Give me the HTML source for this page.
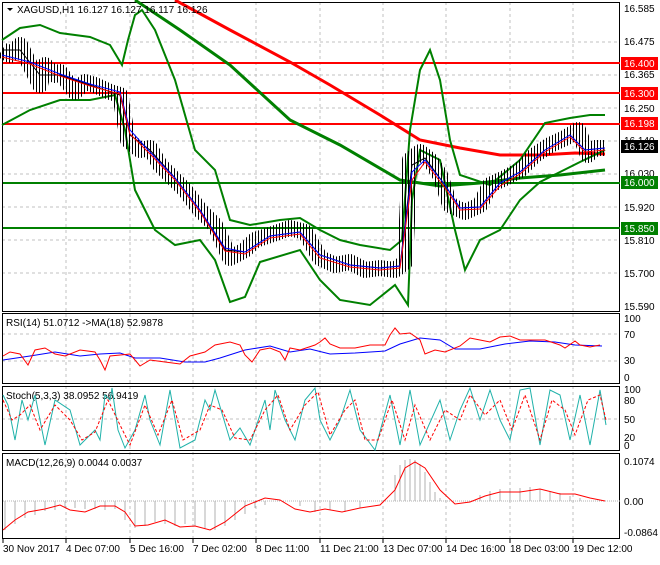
<!DOCTYPE html>
<html><head><meta charset="utf-8"><style>
html,body{margin:0;padding:0;background:#fff;}
body{width:660px;height:560px;overflow:hidden;font-family:"Liberation Sans",sans-serif;}
svg text{font-family:"Liberation Sans",sans-serif;font-size:10px;fill:#000;}
</style></head><body>
<svg width="660" height="560" viewBox="0 0 660 560" xmlns="http://www.w3.org/2000/svg">
<defs>
<pattern id="bars" patternUnits="userSpaceOnUse" width="3" height="10"><rect x="0" y="0" width="1" height="10" fill="#000"/></pattern>
</defs>
<rect width="660" height="560" fill="#fff"/>
<!-- grid -->
<g stroke="#c0c0c0" stroke-dasharray="3,3" stroke-width="1">
<line x1="66" y1="2" x2="66" y2="539"/><line x1="130" y1="2" x2="130" y2="539"/>
<line x1="193" y1="2" x2="193" y2="539"/><line x1="256" y1="2" x2="256" y2="539"/>
<line x1="320" y1="2" x2="320" y2="539"/><line x1="383" y1="2" x2="383" y2="539"/>
<line x1="446" y1="2" x2="446" y2="539"/><line x1="510" y1="2" x2="510" y2="539"/>
<line x1="573" y1="2" x2="573" y2="539"/>
<line x1="2" y1="42" x2="620" y2="42"/><line x1="2" y1="75" x2="620" y2="75"/>
<line x1="2" y1="108" x2="620" y2="108"/><line x1="2" y1="141" x2="620" y2="141"/>
<line x1="2" y1="174" x2="620" y2="174"/><line x1="2" y1="207" x2="620" y2="207"/>
<line x1="2" y1="240" x2="620" y2="240"/><line x1="2" y1="273" x2="620" y2="273"/>
<line x1="2" y1="334" x2="620" y2="334"/><line x1="2" y1="361" x2="620" y2="361"/>
<line x1="2" y1="419" x2="620" y2="419"/>
</g>
<!-- panel borders -->
<g fill="none" stroke="#000" stroke-width="1">
<rect x="2.5" y="2.5" width="617" height="309"/>
<rect x="2.5" y="313.5" width="617" height="70"/>
<rect x="2.5" y="386.5" width="617" height="64"/>
<rect x="2.5" y="453.5" width="617" height="85"/>
</g>
<!-- horizontal levels -->
<g stroke-width="2">
<line x1="3" y1="63" x2="620" y2="63" stroke="#f00"/>
<line x1="3" y1="93" x2="620" y2="93" stroke="#f00"/>
<line x1="3" y1="124" x2="620" y2="124" stroke="#f00"/>
<line x1="3" y1="183" x2="620" y2="183" stroke="#008000"/>
<line x1="3" y1="228" x2="620" y2="228" stroke="#008000"/>
</g>
<!-- MAs -->
<polyline fill="none" stroke="#f00" stroke-width="3" points="175,0 230,30 290,62 330,85 380,115 420,140 460,148 500,155 540,155 575,153 605,154"/>
<polyline fill="none" stroke="#008000" stroke-width="3" points="135,0 180,30 230,65 290,120 340,145 400,180 440,186 480,183 520,178 560,175 605,170"/>
<!-- bollinger -->
<polyline fill="none" stroke="#008000" stroke-width="2" points="2,40 20,28 40,25 60,33 90,37 110,45 122,65 128,40 135,15 142,10 155,30 175,80 195,150 215,170 230,220 250,225 280,220 300,218 320,230 340,240 360,245 390,250 402,240 410,130 420,70 430,50 440,80 450,140 460,175 490,185 520,160 545,123 570,118 590,115 605,115"/>
<polyline fill="none" stroke="#008000" stroke-width="2" points="2,125 30,110 60,100 90,100 115,95 125,130 135,190 155,230 175,245 200,240 215,260 230,302 245,297 260,262 300,250 320,280 340,300 370,305 395,285 408,305 412,200 420,150 440,160 455,230 465,270 480,240 500,230 520,200 540,182 560,172 580,162 605,150"/>
<!-- price bars -->
<polyline fill="none" stroke="url(#bars)" stroke-width="16" stroke-linejoin="round" points="2,50 10,55 20,45 30,65 40,85 45,65 55,75 60,72 75,92 85,82 95,85 110,92 120,95 128,140 140,150 150,148 160,165 170,175 185,190 200,210 215,225 230,258 245,250 255,240 270,235 290,228 305,232 320,258 335,265 350,262 365,270 380,268 395,270 405,262 410,160 420,152 430,160 440,175 450,205 465,212 480,205 490,185 505,178 520,170 535,155 550,145 565,138 578,130 588,155 595,148 605,148"/>
<polyline fill="none" stroke="#000" stroke-width="1" points="2,50 20,50 40,75 60,75 90,85 120,95 130,135 150,150 175,178 200,210 225,250 245,252 270,236 300,232 320,255 350,265 380,268 400,266 412,165 425,158 445,185 460,208 480,207 500,183 520,172 545,150 570,135 585,150 605,148"/>
<polyline fill="none" stroke="#00f" stroke-width="1" points="2,55 30,62 60,74 90,84 120,92 130,130 150,152 175,178 200,210 225,248 245,252 270,236 300,232 320,255 350,265 380,268 400,266 412,172 425,160 445,185 460,208 480,207 500,183 520,172 545,150 570,135 585,150 605,148"/>
<polyline fill="none" stroke="#f00" stroke-width="1" points="2,57 30,64 60,76 90,86 120,94 130,134 150,154 175,180 200,212 225,251 245,254 270,238 300,234 320,258 350,267 380,270 400,268 412,180 425,162 445,188 460,210 480,209 500,186 520,174 545,152 570,137 585,152 605,150"/>
<!-- header -->
<polygon points="7,8 13,8 10,11" fill="#000"/>
<text x="17" y="13">XAGUSD,H1  16.127 16.127 16.117 16.126</text>
<!-- price axis -->
<g>
<text x="624" y="12">16.585</text><text x="624" y="45">16.475</text>
<text x="624" y="78">16.365</text><text x="624" y="112">16.250</text>
<text x="624" y="144">16.140</text><text x="624" y="177">16.030</text>
<text x="624" y="211">15.920</text><text x="624" y="244">15.810</text>
<text x="624" y="277">15.700</text><text x="624" y="310">15.590</text>
<rect x="621" y="57" width="37" height="13" fill="#f00"/><text x="624" y="67" style="fill:#fff">16.400</text>
<rect x="621" y="87" width="37" height="13" fill="#f00"/><text x="624" y="97" style="fill:#fff">16.300</text>
<rect x="621" y="117" width="37" height="13" fill="#f00"/><text x="624" y="127" style="fill:#fff">16.198</text>
<rect x="621" y="140" width="37" height="13" fill="#000"/><text x="624" y="150" style="fill:#fff">16.126</text>
<rect x="621" y="176" width="37" height="13" fill="#008000"/><text x="624" y="186" style="fill:#fff">16.000</text>
<rect x="621" y="222" width="37" height="13" fill="#008000"/><text x="624" y="232" style="fill:#fff">15.850</text>
</g>
<!-- RSI -->
<text x="6" y="326">RSI(14) 51.0712  -&gt;MA(18) 52.9878</text>
<polyline fill="none" stroke="#00f" stroke-width="1" points="3,360 30,356 55,352 80,356 100,354 120,353 135,358 160,358 185,362 205,362 220,358 245,350 270,346 290,352 310,349 330,354 355,353 385,351 400,344 420,338 440,340 455,349 480,349 505,344 530,341 555,342 575,345 602,346"/>
<polyline fill="none" stroke="#f00" stroke-width="1" points="3,356 10,352 20,354 28,365 35,350 45,348 55,354 65,356 80,350 95,352 100,360 105,370 110,356 130,354 140,366 150,360 165,362 180,364 190,356 205,352 215,345 230,342 240,345 245,355 252,362 260,350 270,348 280,352 285,360 290,348 300,350 315,345 320,342 325,338 330,344 340,348 355,348 370,345 380,345 385,345 390,335 395,328 400,334 410,333 420,340 425,354 435,350 445,352 460,346 470,338 480,340 490,342 500,337 510,336 520,340 530,340 545,340 560,345 565,348 575,341 580,345 590,347 600,345"/>
<text x="624" y="322">100</text><text x="624" y="338">70</text><text x="624" y="364">30</text><text x="624" y="381">0</text>
<!-- Stoch -->
<text x="6" y="399">Stoch(5,3,3) 38.0952 56.9419</text>
<polyline fill="none" stroke="#20b2aa" stroke-width="1" points="3,395 8,405 15,440 22,400 28,420 35,395 45,445 55,400 70,410 80,445 95,430 100,440 105,395 110,400 112,388 118,430 125,448 135,430 145,395 150,420 160,445 170,390 180,448 195,440 205,400 210,410 215,390 230,440 240,428 250,445 265,400 270,430 275,390 285,420 295,440 305,400 315,388 320,420 330,440 340,420 350,390 360,430 375,450 390,395 400,445 410,390 420,445 440,400 450,440 460,410 470,388 480,420 490,390 500,420 510,440 520,390 530,388 540,445 550,390 560,395 570,440 580,395 590,445 600,390 606,425"/>
<polyline fill="none" stroke="#f00" stroke-width="1" stroke-dasharray="3,2" points="3,400 12,420 20,415 30,405 40,430 55,405 70,420 82,440 95,432 108,400 120,425 130,445 145,405 158,435 172,400 183,440 200,430 210,405 222,410 235,438 250,440 265,410 278,395 290,430 305,405 318,392 330,435 345,410 355,400 365,440 378,440 392,400 405,440 415,405 430,440 445,410 460,420 470,395 485,415 500,400 512,430 525,395 540,440 552,400 565,410 575,435 588,400 600,395 606,420"/>
<text x="624" y="393">100</text><text x="624" y="404">80</text><text x="624" y="423">50</text><text x="624" y="441">20</text><text x="624" y="449">0</text>
<!-- MACD -->
<text x="6" y="466">MACD(12,26,9) 0.0044 0.0037</text>
<g stroke="#b0b0b0" stroke-width="1">
<line x1="5" y1="501" x2="5" y2="530"/><line x1="15" y1="501" x2="15" y2="524"/><line x1="25" y1="501" x2="25" y2="518"/><line x1="35" y1="501" x2="35" y2="515"/><line x1="45" y1="501" x2="45" y2="511"/><line x1="55" y1="501" x2="55" y2="510"/><line x1="65" y1="501" x2="65" y2="508"/><line x1="75" y1="501" x2="75" y2="508"/><line x1="85" y1="501" x2="85" y2="509"/><line x1="95" y1="501" x2="95" y2="509"/><line x1="105" y1="501" x2="105" y2="510"/><line x1="115" y1="501" x2="115" y2="509"/><line x1="125" y1="501" x2="125" y2="520"/><line x1="135" y1="501" x2="135" y2="528"/><line x1="145" y1="501" x2="145" y2="526"/><line x1="155" y1="501" x2="155" y2="522"/><line x1="165" y1="501" x2="165" y2="524"/><line x1="175" y1="501" x2="175" y2="526"/><line x1="185" y1="501" x2="185" y2="524"/><line x1="195" y1="501" x2="195" y2="526"/><line x1="205" y1="501" x2="205" y2="529"/><line x1="215" y1="501" x2="215" y2="530"/><line x1="225" y1="501" x2="225" y2="526"/><line x1="235" y1="501" x2="235" y2="520"/><line x1="245" y1="501" x2="245" y2="514"/><line x1="255" y1="501" x2="255" y2="508"/><line x1="265" y1="501" x2="265" y2="505"/><line x1="300" y1="501" x2="300" y2="506"/><line x1="315" y1="501" x2="315" y2="512"/><line x1="330" y1="501" x2="330" y2="510"/><line x1="345" y1="501" x2="345" y2="512"/><line x1="360" y1="501" x2="360" y2="508"/>
<line x1="395" y1="501" x2="395" y2="475"/><line x1="400" y1="501" x2="400" y2="465"/><line x1="405" y1="501" x2="405" y2="460"/><line x1="410" y1="501" x2="410" y2="459"/><line x1="415" y1="501" x2="415" y2="460"/><line x1="420" y1="501" x2="420" y2="464"/><line x1="425" y1="501" x2="425" y2="472"/><line x1="430" y1="501" x2="430" y2="482"/><line x1="435" y1="501" x2="435" y2="492"/><line x1="440" y1="501" x2="440" y2="498"/>
<line x1="480" y1="501" x2="480" y2="495"/><line x1="490" y1="501" x2="490" y2="491"/><line x1="500" y1="501" x2="500" y2="489"/><line x1="510" y1="501" x2="510" y2="488"/><line x1="520" y1="501" x2="520" y2="488"/><line x1="530" y1="501" x2="530" y2="487"/><line x1="540" y1="501" x2="540" y2="489"/><line x1="550" y1="501" x2="550" y2="492"/><line x1="560" y1="501" x2="560" y2="493"/><line x1="570" y1="501" x2="570" y2="496"/><line x1="580" y1="501" x2="580" y2="498"/>
</g>
<line x1="3" y1="501" x2="620" y2="501" stroke="#b0b0b0" stroke-dasharray="1,1"/>
<polyline fill="none" stroke="#f00" stroke-width="1" points="3,530 15,520 28,512 45,509 60,505 70,510 85,512 100,506 115,506 125,512 135,526 148,525 165,520 180,527 195,526 210,530 225,522 245,506 265,498 280,500 295,509 310,512 325,509 342,512 360,508 380,505 395,490 405,468 415,462 425,468 440,490 455,504 470,502 485,496 500,492 520,492 540,489 560,494 575,494 590,498 605,501"/>
<text x="624" y="465">0.1074</text><text x="624" y="505">0.00</text><text x="624" y="536">-0.0864</text>
<!-- time axis -->
<g stroke="#000"><line x1="3" y1="539" x2="3" y2="543"/><line x1="66" y1="539" x2="66" y2="543"/><line x1="130" y1="539" x2="130" y2="543"/><line x1="193" y1="539" x2="193" y2="543"/><line x1="256" y1="539" x2="256" y2="543"/><line x1="320" y1="539" x2="320" y2="543"/><line x1="383" y1="539" x2="383" y2="543"/><line x1="446" y1="539" x2="446" y2="543"/><line x1="510" y1="539" x2="510" y2="543"/><line x1="573" y1="539" x2="573" y2="543"/></g>
<text x="3" y="552">30 Nov 2017</text><text x="66" y="552">4 Dec 07:00</text><text x="130" y="552">5 Dec 16:00</text><text x="193" y="552">7 Dec 02:00</text><text x="256" y="552">8 Dec 11:00</text><text x="320" y="552">11 Dec 21:00</text><text x="383" y="552">13 Dec 07:00</text><text x="446" y="552">14 Dec 16:00</text><text x="510" y="552">18 Dec 03:00</text><text x="573" y="552">19 Dec 12:00</text>
</svg>
</body></html>
